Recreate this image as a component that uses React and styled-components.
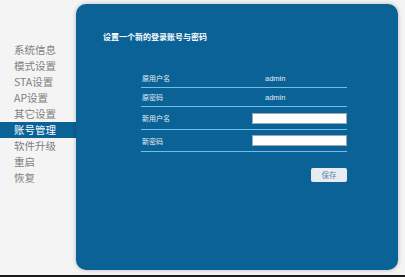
import React from 'react'
import styled, { createGlobalStyle } from 'styled-components'

const GlobalStyle = createGlobalStyle`
  html, body {
    margin: 0;
    padding: 0;
    background: #f4f4f4;
  }
  body {
    font-family: 'Noto Sans CJK SC', 'Noto Sans', sans-serif;
  }
`

const menu = ['系统信息', '模式设置', 'STA设置', 'AP设置', '其它设置', '账号管理', '软件升级', '重启', '恢复']

const rows = [
  { label: '原用户名', value: 'admin', height: 19 },
  { label: '原密码', value: 'admin', height: 19 },
  { label: '新用户名', input: true, height: 23 },
  { label: '新密码', input: true, height: 22 },
]

const App = () => {
  return (
    <Wrapper>
      <GlobalStyle />
      <Sidebar>
        {menu.map((item) => (
          <MenuItem key={item} $active={item === '账号管理'}>
            {item}
          </MenuItem>
        ))}
      </Sidebar>
      <Panel>
        <Title>设置一个新的登录账号与密码</Title>
        <Form>
          {rows.map((row) => (
            <Row key={row.label} $h={row.height}>
              <Label>{row.label}</Label>
              {row.input ? <Input type='text' /> : <Value>{row.value}</Value>}
            </Row>
          ))}
          <Actions>
            <SaveButton>保存</SaveButton>
          </Actions>
        </Form>
      </Panel>
    </Wrapper>
  )
}

const Wrapper = styled.div`
  display: flex;
  width: 405px;
  height: 275px;
  border-bottom: 2px solid #1a1a1a;
  background: #f4f4f4;
  overflow: hidden;
`

const Sidebar = styled.nav`
  width: 76px;
  flex-shrink: 0;
  padding-top: 42px;
  display: flex;
  flex-direction: column;
`

const MenuItem = styled.div`
  height: 16px;
  line-height: 16px;
  padding-left: 14px;
  font-size: 10.5px;
  color: ${(p) => (p.$active ? '#ffffff' : '#808080')};
  background: ${(p) => (p.$active ? '#0a6297' : 'transparent')};
  white-space: nowrap;
`

const Panel = styled.main`
  margin-top: 4px;
  width: 322px;
  height: 266px;
  background: #0a6297;
  border-radius: 10px;
  box-shadow: 0 0 4px rgba(0, 0, 0, 0.25);
  padding: 28px 0 0 27px;
  box-sizing: border-box;
  color: #ffffff;
`

const Title = styled.h1`
  margin: 0;
  font-size: 8px;
  line-height: 10px;
  font-weight: bold;
  color: #ffffff;
`

const Form = styled.div`
  margin: 27px 0 0 38px;
  width: 206px;
  display: flex;
  flex-direction: column;
`

const Row = styled.div`
  height: ${(p) => p.$h}px;
  display: flex;
  align-items: center;
  border-bottom: 1px solid #6cc0ec;
  box-sizing: border-box;
`

const Label = styled.span`
  width: 110px;
  padding-left: 1px;
  font-size: 7px;
  color: #e6eef4;
`

const Value = styled.span`
  margin-left: 13px;
  font-family: 'Liberation Sans', Arial, sans-serif;
  font-size: 7.5px;
  color: #e2ebf1;
`

const Input = styled.input`
  width: 95px;
  height: 11px;
  padding: 0;
  margin: 0;
  border: 1px solid #9aa8b3;
  background: #ffffff;
  box-sizing: border-box;
`

const Actions = styled.div`
  display: flex;
  justify-content: flex-end;
  padding-top: 16px;
`

const SaveButton = styled.button`
  width: 36px;
  height: 14px;
  padding: 0;
  border: none;
  border-radius: 2px;
  background: #e6ecf1;
  color: #5b86a8;
  font-family: 'Noto Sans CJK SC', sans-serif;
  font-size: 7.5px;
  line-height: 14px;
`

export default App
